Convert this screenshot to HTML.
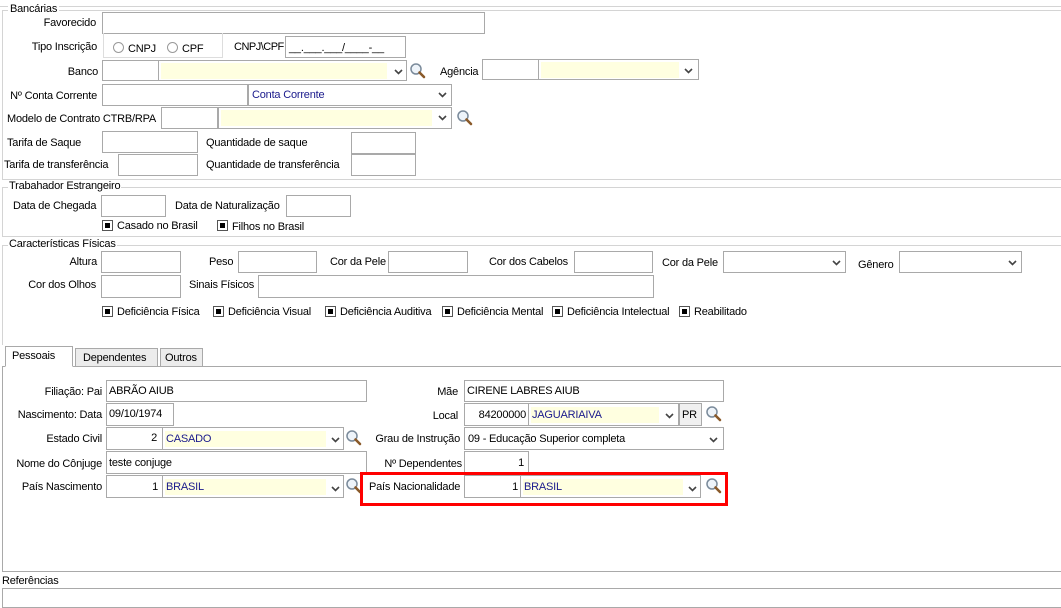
<!DOCTYPE html>
<html><head><meta charset="utf-8">
<style>
*{box-sizing:border-box;margin:0;padding:0}
body{width:1061px;height:598px;background:#fff;position:relative;overflow:hidden;font-family:"Liberation Sans",sans-serif;font-size:11px;color:#000}
.t{position:absolute;white-space:nowrap;line-height:13px;letter-spacing:-0.2px;margin-top:1px}
.b{position:absolute;border:1px solid #a9a9a9;background:#fff}
.y{position:absolute;background:#ffffe0}
.v{position:absolute;width:9px;height:6px}
.m{position:absolute;width:17px;height:17px}
.bl{color:#1a1a8c}
.ln{position:absolute;background:#d4d4d4;height:1px}
.cb{position:absolute;width:11px;height:11px;border:1px solid #555;background:#fff}
.cb::after{content:"";position:absolute;left:2px;top:2px;width:5px;height:5px;background:#000}
.rd{position:absolute;width:11px;height:11px;border:1px solid #999;border-radius:50%;background:#fff}
</style></head><body>
<svg width="0" height="0" style="position:absolute"><defs>
<symbol id="chev" viewBox="0 0 9 6"><path d="M1 1 L4.5 4.5 L8 1" stroke="#444" stroke-width="1.6" fill="none"/></symbol>
<symbol id="mag" viewBox="0 0 17 17"><circle cx="7" cy="7" r="5" fill="#eef4fa" stroke="#7a8a9a" stroke-width="1.5"/><path d="M10.5 10.5 L15 15" stroke="#8a5a2a" stroke-width="2.6" stroke-linecap="round"/></symbol>
</defs></svg>

<div class="ln" style="left:0;top:6px;width:1061px"></div>
<div style="position:absolute;left:2px;top:10px;width:1062px;height:170px;border:1px solid #d4d4d4"></div>
<div class="t" style="left:8px;top:2px;background:#fff;padding:0 2px">Bancárias</div>
<div class="t" style="right:965px;top:16px">Favorecido</div>
<div class="b" style="left:102px;top:12px;width:383px;height:22px"></div>
<div class="t" style="right:964px;top:40px">Tipo Inscrição</div>
<div style="position:absolute;left:103px;top:33px;width:120px;height:25px;border:1px solid #ddd;border-top:none"></div>
<div class="rd" style="left:113px;top:42px"></div><div class="t" style="left:128px;top:42px">CNPJ</div>
<div class="rd" style="left:167px;top:42px"></div><div class="t" style="left:182px;top:42px">CPF</div>
<div class="t" style="left:234px;top:40px;letter-spacing:-0.5px">CNPJ\CPF</div>
<div class="b" style="left:285px;top:36px;width:121px;height:22px"></div>
<div class="t" style="left:289px;top:41px">__.___.___/____-__</div>

<div class="t" style="right:963px;top:65px">Banco</div>
<div class="b" style="left:102px;top:60px;width:57px;height:21px"></div>
<div class="b" style="left:158px;top:60px;width:249px;height:21px"></div>
<div class="y" style="left:161px;top:63px;width:226px;height:16px"></div>
<svg class="v" style="left:394px;top:69px"><use href="#chev"/></svg>
<svg class="m" style="left:409px;top:62px"><use href="#mag"/></svg>
<div class="t" style="left:440px;top:65px">Agência</div>
<div class="b" style="left:482px;top:59px;width:57px;height:21px"></div>
<div class="b" style="left:538px;top:59px;width:161px;height:21px"></div>
<div class="y" style="left:541px;top:62px;width:138px;height:16px"></div>
<svg class="v" style="left:684px;top:68px"><use href="#chev"/></svg>

<div class="t" style="right:964px;top:89px">Nº Conta Corrente</div>
<div class="b" style="left:102px;top:84px;width:146px;height:22px"></div>
<div class="b" style="left:248px;top:84px;width:204px;height:22px"></div>
<div class="t bl" style="left:252px;top:88px">Conta Corrente</div>
<svg class="v" style="left:438px;top:92px"><use href="#chev"/></svg>

<div class="t" style="left:7px;top:112px">Modelo de Contrato CTRB/RPA</div>
<div class="b" style="left:161px;top:107px;width:57px;height:22px"></div>
<div class="b" style="left:218px;top:107px;width:234px;height:22px"></div>
<div class="y" style="left:221px;top:110px;width:211px;height:16px"></div>
<svg class="v" style="left:438px;top:115px"><use href="#chev"/></svg>
<svg class="m" style="left:456px;top:109px"><use href="#mag"/></svg>

<div class="t" style="left:7px;top:136px">Tarifa de Saque</div>
<div class="b" style="left:102px;top:131px;width:96px;height:22px"></div>
<div class="t" style="left:206px;top:136px">Quantidade de saque</div>
<div class="b" style="left:351px;top:132px;width:65px;height:22px"></div>
<div class="t" style="left:4px;top:158px">Tarifa de transferência</div>
<div class="b" style="left:118px;top:154px;width:80px;height:22px"></div>
<div class="t" style="left:206px;top:158px">Quantidade de transferência</div>
<div class="b" style="left:351px;top:154px;width:65px;height:22px"></div>

<div style="position:absolute;left:2px;top:187px;width:1062px;height:50px;border:1px solid #d4d4d4"></div>
<div class="t" style="left:8px;top:179px;background:#fff;padding:0 1px">Trabahador Estrangeiro</div>
<div class="t" style="left:13px;top:199px">Data de Chegada</div>
<div class="b" style="left:101px;top:195px;width:65px;height:22px"></div>
<div class="t" style="left:175px;top:199px">Data de Naturalização</div>
<div class="b" style="left:286px;top:195px;width:65px;height:22px"></div>
<div class="cb" style="left:102px;top:220px"></div><div class="t" style="left:117px;top:219px">Casado no Brasil</div>
<div class="cb" style="left:217px;top:220px"></div><div class="t" style="left:232px;top:220px">Filhos no Brasil</div>

<div style="position:absolute;left:2px;top:245px;width:1062px;height:100px;border:1px solid #d4d4d4;border-bottom:none"></div>
<div class="t" style="left:8px;top:237px;background:#fff;padding:0 1px">Características Físicas</div>
<div class="t" style="right:964px;top:255px">Altura</div>
<div class="b" style="left:101px;top:251px;width:80px;height:22px"></div>
<div class="t" style="left:209px;top:255px">Peso</div>
<div class="b" style="left:238px;top:251px;width:79px;height:22px"></div>
<div class="t" style="left:330px;top:255px">Cor da Pele</div>
<div class="b" style="left:388px;top:251px;width:80px;height:22px"></div>
<div class="t" style="left:489px;top:255px">Cor dos Cabelos</div>
<div class="b" style="left:574px;top:251px;width:79px;height:22px"></div>
<div class="t" style="left:662px;top:256px">Cor da Pele</div>
<div class="b" style="left:723px;top:251px;width:123px;height:22px"></div>
<svg class="v" style="left:832px;top:260px"><use href="#chev"/></svg>
<div class="t" style="left:858px;top:258px">Gênero</div>
<div class="b" style="left:899px;top:251px;width:123px;height:22px"></div>
<svg class="v" style="left:1008px;top:260px"><use href="#chev"/></svg>
<div class="t" style="right:965px;top:278px">Cor dos Olhos</div>
<div class="b" style="left:101px;top:275px;width:80px;height:23px"></div>
<div class="t" style="left:189px;top:278px">Sinais Físicos</div>
<div class="b" style="left:258px;top:275px;width:396px;height:23px"></div>
<div class="cb" style="left:102px;top:306px"></div><div class="t" style="left:117px;top:305px">Deficiência Física</div>
<div class="cb" style="left:213px;top:306px"></div><div class="t" style="left:228px;top:305px">Deficiência Visual</div>
<div class="cb" style="left:325px;top:306px"></div><div class="t" style="left:340px;top:305px">Deficiência Auditiva</div>
<div class="cb" style="left:442px;top:306px"></div><div class="t" style="left:457px;top:305px">Deficiência Mental</div>
<div class="cb" style="left:552px;top:306px"></div><div class="t" style="left:567px;top:305px">Deficiência Intelectual</div>
<div class="cb" style="left:679px;top:306px"></div><div class="t" style="left:694px;top:305px">Reabilitado</div>

<div style="position:absolute;left:2px;top:366px;width:1062px;height:206px;border:1px solid #a9a9a9;border-right:none"></div>
<div style="position:absolute;left:5px;top:346px;width:68px;height:21px;border:1px solid #a9a9a9;border-bottom:1px solid #fff;background:#fff"></div>
<div class="t" style="left:12px;top:349px">Pessoais</div>
<div style="position:absolute;left:75px;top:348px;width:83px;height:19px;border:1px solid #a9a9a9;background:#ececec"></div>
<div class="t" style="left:83px;top:351px">Dependentes</div>
<div style="position:absolute;left:160px;top:348px;width:43px;height:19px;border:1px solid #a9a9a9;background:#ececec"></div>
<div class="t" style="left:165px;top:351px">Outros</div>

<div class="t" style="right:959px;top:385px">Filiação: Pai</div>
<div class="b" style="left:106px;top:380px;width:261px;height:22px"></div>
<div class="t" style="left:109px;top:384px">ABRÃO AIUB</div>
<div class="t" style="right:603px;top:385px">Mãe</div>
<div class="b" style="left:464px;top:380px;width:260px;height:22px"></div>
<div class="t" style="left:467px;top:384px">CIRENE LABRES AIUB</div>

<div class="t" style="right:959px;top:408px">Nascimento: Data</div>
<div class="b" style="left:106px;top:403px;width:68px;height:23px"></div>
<div class="t" style="left:109px;top:407px">09/10/1974</div>
<div class="t" style="right:603px;top:409px">Local</div>
<div class="b" style="left:464px;top:403px;width:65px;height:23px"></div>
<div class="t" style="right:535px;top:408px">84200000</div>
<div class="b" style="left:528px;top:403px;width:151px;height:23px"></div>
<div class="y" style="left:531px;top:407px;width:128px;height:16px"></div>
<div class="t bl" style="left:532px;top:408px">JAGUARIAIVA</div>
<svg class="v" style="left:665px;top:413px"><use href="#chev"/></svg>
<div class="b" style="left:679px;top:403px;width:23px;height:23px;background:#f0f0f0"></div>
<div class="t" style="left:682px;top:408px">PR</div>
<svg class="m" style="left:705px;top:405px"><use href="#mag"/></svg>

<div class="t" style="right:959px;top:432px">Estado Civil</div>
<div class="b" style="left:106px;top:427px;width:57px;height:23px"></div>
<div class="t" style="right:904px;top:431px">2</div>
<div class="b" style="left:162px;top:427px;width:182px;height:23px"></div>
<div class="y" style="left:165px;top:431px;width:161px;height:16px"></div>
<div class="t bl" style="left:166px;top:432px">CASADO</div>
<svg class="v" style="left:331px;top:437px"><use href="#chev"/></svg>
<svg class="m" style="left:345px;top:429px"><use href="#mag"/></svg>
<div class="t" style="right:601px;top:432px">Grau de Instrução</div>
<div class="b" style="left:464px;top:427px;width:260px;height:23px"></div>
<div class="t" style="left:468px;top:432px">09 - Educação Superior completa</div>
<svg class="v" style="left:709px;top:437px"><use href="#chev"/></svg>

<div class="t" style="right:959px;top:457px">Nome do Cônjuge</div>
<div class="b" style="left:106px;top:451px;width:261px;height:23px"></div>
<div class="t" style="left:109px;top:456px">teste conjuge</div>
<div class="t" style="right:599px;top:457px">Nº Dependentes</div>
<div class="b" style="left:464px;top:451px;width:65px;height:23px"></div>
<div class="t" style="right:537px;top:456px">1</div>

<div class="t" style="right:959px;top:480px">País Nascimento</div>
<div class="b" style="left:106px;top:475px;width:57px;height:23px"></div>
<div class="t" style="right:903px;top:480px">1</div>
<div class="b" style="left:162px;top:475px;width:182px;height:23px"></div>
<div class="y" style="left:165px;top:479px;width:161px;height:16px"></div>
<div class="t bl" style="left:166px;top:480px">BRASIL</div>
<svg class="v" style="left:331px;top:486px"><use href="#chev"/></svg>
<svg class="m" style="left:345px;top:477px"><use href="#mag"/></svg>

<div style="position:absolute;left:360px;top:472px;width:368px;height:34px;border:3px solid #f00"></div>
<div class="t" style="left:369px;top:480px">País Nacionalidade</div>
<div class="b" style="left:464px;top:475px;width:57px;height:23px"></div>
<div class="t" style="right:543px;top:480px">1</div>
<div class="b" style="left:520px;top:475px;width:181px;height:23px"></div>
<div class="y" style="left:523px;top:479px;width:160px;height:16px"></div>
<div class="t bl" style="left:524px;top:480px">BRASIL</div>
<svg class="v" style="left:688px;top:486px"><use href="#chev"/></svg>
<svg class="m" style="left:705px;top:477px"><use href="#mag"/></svg>

<div class="t" style="left:2px;top:574px">Referências</div>
<div style="position:absolute;left:2px;top:588px;width:1062px;height:20px;border:1px solid #a9a9a9;border-right:none"></div>
</body></html>
